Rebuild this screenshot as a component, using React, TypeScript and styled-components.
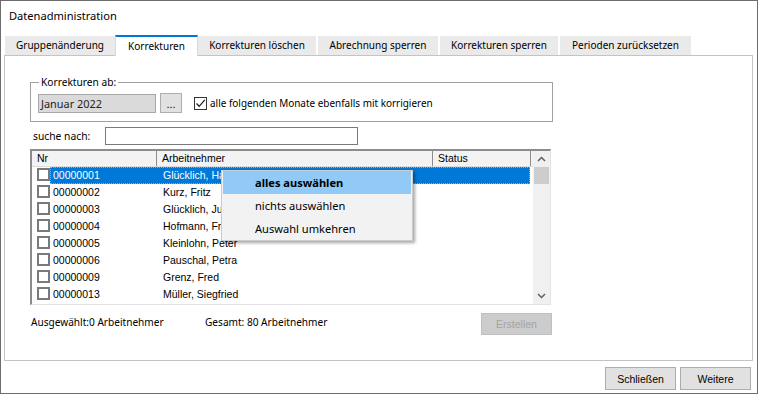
import React from 'react';
import styled, { createGlobalStyle } from 'styled-components';

const UI = `"Noto Sans", "DejaVu Sans", sans-serif`;
const CLASSIC = `"Liberation Sans", Arial, sans-serif`;

const GlobalStyle = createGlobalStyle`
  html, body {
    margin: 0;
    padding: 0;
    background: #fff;
  }
  * {
    box-sizing: border-box;
  }
`;

interface Employee {
    nr: string;
    name: string;
}

const employees: Employee[] = [
    { nr: '00000001', name: 'Glücklich, Hans' },
    { nr: '00000002', name: 'Kurz, Fritz' },
    { nr: '00000003', name: 'Glücklich, Jutta' },
    { nr: '00000004', name: 'Hofmann, Franz' },
    { nr: '00000005', name: 'Kleinlohn, Peter' },
    { nr: '00000006', name: 'Pauschal, Petra' },
    { nr: '00000009', name: 'Grenz, Fred' },
    { nr: '00000013', name: 'Müller, Siegfried' },
];

const tabs = [
    { label: 'Gruppenänderung', width: 110 },
    { label: 'Korrekturen', width: 83, active: true },
    { label: 'Korrekturen löschen', width: 118 },
    { label: 'Abrechnung sperren', width: 120 },
    { label: 'Korrekturen sperren', width: 118 },
    { label: 'Perioden zurücksetzen', width: 131 },
];

const Chevron: React.FC<{ up?: boolean }> = ({ up }) => (
    <svg width="9" height="6" viewBox="0 0 9 6">
        <polyline
            points={up ? '1,5 4.5,1.5 8,5' : '1,1 4.5,4.5 8,1'}
            fill="none"
            stroke="#606060"
            strokeWidth="1.5"
        />
    </svg>
);

const App: React.FC = () => {
    return (
        <>
            <GlobalStyle />
            <Window>
                <Title>Datenadministration</Title>
                <TabBar>
                    {tabs.map((t) => (
                        <Tab key={t.label} $width={t.width} $active={!!t.active}>
                            {t.label}
                        </Tab>
                    ))}
                </TabBar>
                <Panel>
                    <GroupBox>
                        <Legend>Korrekturen ab:</Legend>
                        <GroupRow>
                            <DateField>Januar 2022</DateField>
                            <DotsButton>...</DotsButton>
                            <CheckLabel>
                                <CheckBox>
                                    <svg width="11" height="11" viewBox="0 0 11 11">
                                        <path d="M1.5 5.5 L4.2 8.3 L9.8 1.8" fill="none" stroke="#222" strokeWidth="1.3" />
                                    </svg>
                                </CheckBox>
                                alle folgenden Monate ebenfalls mit korrigieren
                            </CheckLabel>
                        </GroupRow>
                    </GroupBox>

                    <SearchRow>
                        <SearchLabel>suche nach:</SearchLabel>
                        <SearchInput />
                    </SearchRow>

                    <ListBox>
                        <ListMain>
                            <HeaderRow>
                                <HeaderCell $width={125}>Nr</HeaderCell>
                                <HeaderCell $width={276}>Arbeitnehmer</HeaderCell>
                                <HeaderCell $width={98}>Status</HeaderCell>
                            </HeaderRow>
                            {employees.map((e, i) => (
                                <Row key={e.nr}>
                                    <RowCheck />
                                    <RowBody $selected={i === 0}>
                                        <NrCell>{e.nr}</NrCell>
                                        <NameCell>{e.name}</NameCell>
                                    </RowBody>
                                </Row>
                            ))}
                            <Row>
                                <RowCheck />
                            </Row>
                        </ListMain>
                        <ScrollBar>
                            <ScrollArrow>
                                <Chevron up />
                            </ScrollArrow>
                            <ScrollThumb />
                            <ScrollTrack />
                            <ScrollArrow>
                                <Chevron />
                            </ScrollArrow>
                        </ScrollBar>

                        <ContextMenu>
                            <MenuItem $default>alles auswählen</MenuItem>
                            <MenuItem>nichts auswählen</MenuItem>
                            <MenuItem>Auswahl umkehren</MenuItem>
                        </ContextMenu>
                    </ListBox>

                    <StatusRow>
                        <StatusText $width={174}>Ausgewählt:0 Arbeitnehmer</StatusText>
                        <StatusText>Gesamt: 80 Arbeitnehmer</StatusText>
                        <DisabledButton disabled>Erstellen</DisabledButton>
                    </StatusRow>
                </Panel>
                <Footer>
                    <DialogButton>Schließen</DialogButton>
                    <DialogButton>Weitere</DialogButton>
                </Footer>
            </Window>
        </>
    );
};

const Window = styled.div`
  width: 758px;
  height: 394px;
  border: 1px solid #6d6d6d;
  background: #fff;
  display: flex;
  flex-direction: column;
  font-family: ${UI};
  color: #000;
`;

const Title = styled.div`
  height: 34px;
  padding: 7px 0 0 8px;
  font-size: 11.1px;
  line-height: 16px;
`;

const TabBar = styled.div`
  display: flex;
  align-items: flex-end;
  gap: 2px;
  height: 20px;
  margin-left: 4px;
`;

const Tab = styled.div<{ $width: number; $active: boolean }>`
  width: ${(p) => p.$width}px;
  height: ${(p) => (p.$active ? 21 : 19)}px;
  margin: ${(p) => (p.$active ? '0 -2px -1px -2px' : '0')};
  position: relative;
  z-index: ${(p) => (p.$active ? 1 : 0)};
  background: ${(p) => (p.$active ? '#fff' : '#eaeaea')};
  border-top: ${(p) => (p.$active ? '2px solid #0078d7' : 'none')};
  border-left: ${(p) => (p.$active ? '1px solid #d9d9d9' : 'none')};
  border-right: ${(p) => (p.$active ? '1px solid #d9d9d9' : 'none')};
  font-size: 10px;
  line-height: 19px;
  text-align: center;
  white-space: nowrap;
  color: #000;
`;

const Panel = styled.div`
  margin-left: 3px;
  width: 749px;
  height: 306px;
  border: 1px solid #c3c3ca;
  padding: 19px 0 0 25px;
`;

const GroupBox = styled.fieldset`
  margin: 0;
  width: 523px;
  padding: 0 0 8px 7px;
  border: 1px solid #a0a0a0;
  min-inline-size: 0;
`;

const Legend = styled.legend`
  margin-left: 1px;
  padding: 0 2px;
  font-size: 10.2px;
  line-height: 14px;
`;

const GroupRow = styled.div`
  display: flex;
  align-items: center;
  margin-top: 4px;
  height: 20px;
`;

const DateField = styled.div`
  width: 118px;
  height: 19px;
  background: #dadada;
  border: 1px solid #a8a8a8;
  padding-left: 2px;
  font-size: 10.9px;
  line-height: 17px;
  color: #222;
`;

const DotsButton = styled.div`
  width: 22px;
  height: 20px;
  margin-left: 4px;
  background: #e1e1e1;
  border: 1px solid #adadad;
  font-family: ${CLASSIC};
  font-size: 11px;
  line-height: 20px;
  text-align: center;
`;

const CheckLabel = styled.label`
  display: flex;
  align-items: center;
  gap: 3px;
  margin-left: 12px;
  font-size: 9.95px;
  line-height: 14px;
`;

const CheckBox = styled.span`
  width: 13px;
  height: 13px;
  border: 1px solid #333;
  background: #fff;
  display: flex;
  align-items: center;
  justify-content: center;
`;

const SearchRow = styled.div`
  display: flex;
  align-items: center;
  margin-top: 5px;
  height: 18px;
`;

const SearchLabel = styled.span`
  width: 75px;
  padding-left: 3px;
  font-size: 10.3px;
`;

const SearchInput = styled.div`
  width: 253px;
  height: 18px;
  border: 1px solid #7a7a7a;
  background: #fff;
`;

const ListBox = styled.div`
  position: relative;
  margin-top: 4px;
  width: 521px;
  height: 156px;
  border-top: 2px solid #8c8c8c;
  border-left: 2px solid #8c8c8c;
  border-right: 1px solid #e3e3e3;
  border-bottom: 1px solid #e3e3e3;
  display: grid;
  grid-template-columns: 1fr 17px;
  font-family: ${CLASSIC};
  font-size: 10.5px;
`;

const ListMain = styled.div`
  overflow: hidden;
  background: #fff;
`;

const HeaderRow = styled.div`
  display: flex;
  height: 16px;
  background: #f3f3f3;
  border-bottom: 1px solid #dcdcdc;
`;

const HeaderCell = styled.div<{ $width: number }>`
  width: ${(p) => p.$width}px;
  flex: none;
  padding-left: 5px;
  border-right: 1px solid #8c8c8c;
  line-height: 15px;
`;

const Row = styled.div`
  display: flex;
  height: 17px;
`;

const RowCheck = styled.span`
  flex: none;
  width: 13px;
  height: 13px;
  margin: 1px 0 0 5px;
  border: 2px solid #7a7a7a;
  background: #fff;
`;

const RowBody = styled.div<{ $selected: boolean }>`
  width: 480px;
  display: flex;
  border: 1px ${(p) => (p.$selected ? 'dotted #f09a36' : 'solid transparent')};
  background: ${(p) => (p.$selected ? '#0078d7' : 'transparent')};
  color: ${(p) => (p.$selected ? '#fff' : '#000')};
  line-height: 15px;
  white-space: nowrap;
`;

const NrCell = styled.span`
  width: 106px;
  padding-left: 2px;
`;

const NameCell = styled.span`
  padding-left: 6px;
`;

const ScrollBar = styled.div`
  display: flex;
  flex-direction: column;
  background: #f0f0f0;
`;

const ScrollArrow = styled.div`
  height: 16px;
  display: flex;
  align-items: center;
  justify-content: center;
`;

const ScrollThumb = styled.div`
  height: 17px;
  margin: 0 1px;
  background: #cdcdcd;
`;

const ScrollTrack = styled.div`
  flex: 1;
`;

const ContextMenu = styled.div`
  position: absolute;
  left: 189px;
  top: 19px;
  width: 192px;
  padding: 0 1px;
  background: #f2f2f2;
  border: 1px solid #cccccc;
  box-shadow: 2px 2px 3px rgba(0, 0, 0, 0.35);
  font-family: ${UI};
  font-size: 11.1px;
`;

const MenuItem = styled.div<{ $default?: boolean }>`
  height: 23px;
  line-height: 23px;
  padding-left: 32px;
  font-weight: ${(p) => (p.$default ? 700 : 400)};
  background: ${(p) => (p.$default ? '#91c9f7' : 'transparent')};
`;

const StatusRow = styled.div`
  display: flex;
  align-items: flex-start;
  margin-top: 8px;
  width: 522px;
  padding-left: 1px;
`;

const StatusText = styled.span<{ $width?: number }>`
  width: ${(p) => (p.$width ? `${p.$width}px` : 'auto')};
  padding-top: 2px;
  font-size: 10.1px;
  line-height: 14px;
`;

const DisabledButton = styled.button`
  margin-left: auto;
  width: 71px;
  height: 22px;
  background: #cccccc;
  border: 1px solid #bfbfbf;
  color: #a3a3a3;
  font-family: ${CLASSIC};
  font-size: 10.5px;
  padding: 0;
`;

const Footer = styled.div`
  flex: 1;
  display: flex;
  justify-content: flex-end;
  gap: 4px;
  padding: 6px 6px 0 0;
`;

const DialogButton = styled.button`
  width: 71px;
  height: 23px;
  background: #e1e1e1;
  border: 1px solid #adadad;
  font-family: ${CLASSIC};
  font-size: 10.5px;
  color: #000;
  padding: 0;
`;

export default App;
